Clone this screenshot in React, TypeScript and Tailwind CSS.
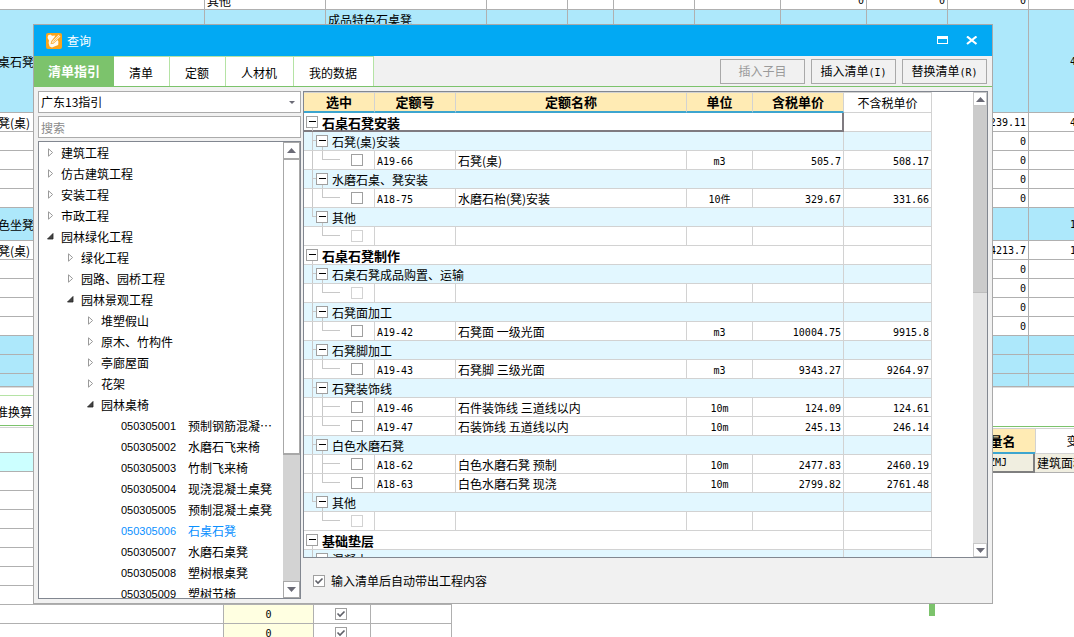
import type { ReactNode } from "react";

type Lead = "group" | "sub" | "subLast" | "leaf" | "leafLast" | "leafEnd";

interface QuotaRow {
  lead: Lead;
  title?: string;
  code?: string;
  name?: string;
  unit?: string;
  taxed?: string;
  untaxed?: string;
}

const quotaRows: QuotaRow[] = [
  { lead: "group", title: "石桌石凳安装" },
  { lead: "sub", title: "石凳(桌)安装" },
  { lead: "leafLast", code: "A19-66", name: "石凳(桌)", unit: "m3", taxed: "505.7", untaxed: "508.17" },
  { lead: "sub", title: "水磨石桌、凳安装" },
  { lead: "leafLast", code: "A18-75", name: "水磨石枱(凳)安装", unit: "10件", taxed: "329.67", untaxed: "331.66" },
  { lead: "subLast", title: "其他" },
  { lead: "leafEnd" },
  { lead: "group", title: "石桌石凳制作" },
  { lead: "sub", title: "石桌石凳成品购置、运输" },
  { lead: "leafLast" },
  { lead: "sub", title: "石凳面加工" },
  { lead: "leafLast", code: "A19-42", name: "石凳面 一级光面", unit: "m3", taxed: "10004.75", untaxed: "9915.8" },
  { lead: "sub", title: "石凳脚加工" },
  { lead: "leafLast", code: "A19-43", name: "石凳脚 三级光面", unit: "m3", taxed: "9343.27", untaxed: "9264.97" },
  { lead: "sub", title: "石凳装饰线" },
  { lead: "leaf", code: "A19-46", name: "石件装饰线 三道线以内", unit: "10m", taxed: "124.09", untaxed: "124.61" },
  { lead: "leafLast", code: "A19-47", name: "石装饰线 五道线以内", unit: "10m", taxed: "245.13", untaxed: "246.14" },
  { lead: "sub", title: "白色水磨石凳" },
  { lead: "leaf", code: "A18-62", name: "白色水磨石凳 预制", unit: "10m", taxed: "2477.83", untaxed: "2460.19" },
  { lead: "leafLast", code: "A18-63", name: "白色水磨石凳 现浇", unit: "10m", taxed: "2799.82", untaxed: "2761.48" },
  { lead: "subLast", title: "其他" },
  { lead: "leafEnd" },
  { lead: "group", title: "基础垫层" },
  { lead: "sub", title: "混凝土" },
];

interface TreeNode {
  level: 0 | 1 | 2;
  label: string;
  open?: boolean;
}

const treeNodes: TreeNode[] = [
  { level: 0, label: "建筑工程" },
  { level: 0, label: "仿古建筑工程" },
  { level: 0, label: "安装工程" },
  { level: 0, label: "市政工程" },
  { level: 0, label: "园林绿化工程", open: true },
  { level: 1, label: "绿化工程" },
  { level: 1, label: "园路、园桥工程" },
  { level: 1, label: "园林景观工程", open: true },
  { level: 2, label: "堆塑假山" },
  { level: 2, label: "原木、竹构件" },
  { level: 2, label: "亭廊屋面" },
  { level: 2, label: "花架" },
  { level: 2, label: "园林桌椅", open: true },
];

const treeLeaves: [string, string][] = [
  ["050305001", "预制钢筋混凝…"],
  ["050305002", "水磨石飞来椅"],
  ["050305003", "竹制飞来椅"],
  ["050305004", "现浇混凝土桌凳"],
  ["050305005", "预制混凝土桌凳"],
  ["050305006", "石桌石凳"],
  ["050305007", "水磨石桌凳"],
  ["050305008", "塑树根桌凳"],
  ["050305009", "塑树节椅"],
];

interface SheetRow {
  size: string;
  tint?: boolean;
  first?: string;
  kind?: string;
  title?: string;
  zeros?: boolean;
  amount?: string;
  tail?: string;
}

const sheetRows: SheetRow[] = [
  { size: "h-[19px]", kind: "其他", zeros: true, amount: "0" },
  { size: "h-[103px]", tint: true, first: "桌石凳", title: "成品特色石桌凳", tail: "4" },
  { size: "h-[19px]", first: "凳(桌)", amount: "4239.11", tail: "4" },
  { size: "h-[19px]", amount: "0" },
  { size: "h-[19px]", amount: "0" },
  { size: "h-[19px]", amount: "0" },
  { size: "h-[19px]", amount: "0" },
  { size: "h-[33px]", tint: true, first: "色坐凳", tail: "1" },
  { size: "h-[19px]", first: "凳(桌)", amount: "4213.7", tail: "1" },
  { size: "h-[19px]", amount: "0" },
  { size: "h-[19px]", amount: "0" },
  { size: "h-[19px]", amount: "0" },
  { size: "h-[19px]", amount: "0" },
  { size: "h-[19px]", tint: true },
  { size: "h-[19px]", tint: true },
  { size: "h-[13px]", tint: true },
];

const num = "font-['DejaVu_Sans_Mono','Noto_Sans_CJK_SC',monospace] text-[10px]";

function Sheet() {
  const cell = "border-r border-b border-[#b0b0b0] p-0 whitespace-nowrap overflow-hidden";
  return (
    <div className="-mt-[9px] shrink-0">
      <table className="w-[1115px] table-fixed border-separate border-spacing-0 leading-[10px]">
        <colgroup>
          <col className="w-[205px]" />
          <col className="w-[121px]" />
          <col className="w-[161px]" />
          <col className="w-[81px]" />
          <col className="w-[46px]" />
          <col className="w-[81px]" />
          <col className="w-[86px]" />
          <col className="w-[86px]" />
          <col className="w-[81px]" />
          <col className="w-[81px]" />
          <col className="w-[86px]" />
        </colgroup>
        <tbody>
          {sheetRows.map((r, i) => (
            <tr key={i} className={r.tint ? `${r.size} bg-[#ade8fb]` : r.size}>
              <td className={`${cell} pt-0.5`}>
                <span className="-ml-0.5">{r.first}</span>
              </td>
              <td className={`${cell} pt-0.5 pl-0.5`}>{r.kind}</td>
              <td className={`${cell} ${r.title ? "pt-[5px]" : ""} pl-0.5 align-top`}>{r.title}</td>
              <td className={cell} />
              <td className={cell} />
              <td className={cell} />
              <td className={cell} />
              <td className={`${cell} ${num} pt-0.5 pr-0.5 text-right`}>{r.zeros ? "0" : ""}</td>
              <td className={`${cell} ${num} pt-0.5 pr-0.5 text-right`}>{r.zeros ? "0" : ""}</td>
              <td className={`${cell} ${num} pt-0.5 pr-0.5 text-right`}>{r.amount}</td>
              <td className={`${cell} ${num} pt-0.5 pl-[41px]`}>{r.tail}</td>
            </tr>
          ))}
        </tbody>
      </table>
    </div>
  );
}

function CheckBox({ id, on, faint, label }: { id?: string; on?: boolean; faint?: boolean; label?: string }) {
  return (
    <span className="relative block size-3 shrink-0">
      <input
        id={id}
        type="checkbox"
        defaultChecked={on}
        disabled={faint}
        aria-label={label}
        className={
          faint
            ? "block size-3 appearance-none border border-[#d2d2d2] bg-white"
            : "block size-3 appearance-none border border-[#a0a0a0] bg-white"
        }
      />
      {on && (
        <svg className="pointer-events-none absolute inset-0" width="12" height="12" viewBox="0 0 12 12" fill="none">
          <path d="M2.5 5.5 5 8 9.5 3.5" stroke="#5f6068" strokeWidth="1.6" />
        </svg>
      )}
    </span>
  );
}

function LowerPane() {
  const cell = "border-r border-b border-[#b0b0b0] p-0";
  return (
    <div className="flex min-h-0 flex-1 border-t border-[#dcdcdc]">
      <div className="w-[929px] shrink-0 overflow-hidden pt-[7px]">
        <div className="h-[31px] border-t border-b border-t-[#b5e3a5] border-b-[#7cc36c] pt-[10px] leading-3">
          <span className="-ml-1">准换算</span>
        </div>
        <table className="mt-px w-[452px] table-fixed border-separate border-spacing-0 border-t border-[#d2d2d2] leading-3">
          <colgroup>
            <col className="w-[224px]" />
            <col className="w-[90px]" />
            <col className="w-[57px]" />
            <col className="w-[81px]" />
          </colgroup>
          <tbody>
            <tr className="h-[25px]">
              <td className={cell} />
              <td className={cell} />
              <td className={cell} />
              <td className={cell} />
            </tr>
            {Array.from({ length: 10 }, (_, i) => (
              <tr key={i} className={i === 0 ? "h-[19px] bg-[#ccffff]" : "h-[19px]"}>
                <td className={cell} />
                <td className={`${cell} ${num} bg-[#ffffe1] pt-0.5 text-center`}>{i > 7 ? "0" : ""}</td>
                <td className={cell}>
                  {i > 7 && (
                    <div className="flex justify-center pr-0.5">
                      <CheckBox on label="0" />
                    </div>
                  )}
                </td>
                <td className={cell} />
              </tr>
            ))}
          </tbody>
        </table>
      </div>
      <div className="w-1.5 shrink-0 pb-[21px]">
        <div className="h-full bg-[#7cc36c]" />
      </div>
      <div className="min-w-0 flex-1 overflow-hidden bg-white pt-[38px]">
        <div className="h-px bg-[#7cc36c]" />
        <table className="mt-px w-[210px] table-fixed border-separate border-spacing-0 border-t border-[#d2d2d2] leading-3">
          <colgroup>
            <col className="w-[22px]" />
            <col className="w-[78px]" />
            <col className="w-[110px]" />
          </colgroup>
          <thead>
            <tr className="h-[25px]">
              <th className="border-r border-[#d2d2d2] p-0" />
              <th className="border-b-2 border-b-[#3da5cf] bg-[#ffebb4] p-0 text-[13px] font-bold">变量名</th>
              <th className="border-b border-l border-[#d2d2d2] p-0 font-normal">变量含义</th>
            </tr>
          </thead>
          <tbody>
            <tr className="h-[19px] bg-[#f0eee0]">
              <td className="border-b border-[#b0b0b0] p-0" />
              <td className={`${num} border-r-2 border-b-2 border-[#7f7f7f] p-0 text-center`}>JZMJ</td>
              <td className="border-b border-[#b0b0b0] py-0 pr-0 pl-0.5">建筑面积</td>
            </tr>
          </tbody>
        </table>
      </div>
    </div>
  );
}

function Caret({ up }: { up?: boolean }) {
  return (
    <svg width="9" height="5" viewBox="0 0 9 5" fill="#6b6b76">
      <path d={up ? "M4.5 0 9 5H0z" : "M4.5 5 0 0h9z"} />
    </svg>
  );
}

function TreeMark({ open }: { open?: boolean }) {
  return open ? (
    <svg width="7" height="7" viewBox="0 0 7 7">
      <path d="M6 .5v5.5H.5z" fill="#444" stroke="#222" strokeWidth=".8" />
    </svg>
  ) : (
    <svg width="7" height="9" viewBox="0 0 7 9" fill="none">
      <path d="M1.5.8v7.4L5.6 4.5z" stroke="#9a9a9a" />
    </svg>
  );
}

const treeIndent = ["pl-2", "pl-7", "pl-12"];

function TreePanel() {
  return (
    <div className="flex min-h-0 flex-1 border border-[#828790] bg-white">
      <ul className="min-w-0 flex-1 overflow-hidden">
        {treeNodes.map((n, i) => (
          <li key={i} className={`flex h-[21px] items-center ${treeIndent[n.level]}`}>
            <button type="button" className="flex items-center gap-[7px]">
              <TreeMark open={n.open} />
              <span>{n.label}</span>
            </button>
          </li>
        ))}
        {treeLeaves.map(([id, name]) => (
          <li
            key={id}
            className={
              id === "050305006"
                ? "flex h-[21px] items-center pl-[82px] text-[#0a90ff]"
                : "flex h-[21px] items-center pl-[82px]"
            }
          >
            <span className="w-[67px] shrink-0 pt-0.5 font-['Liberation_Sans',sans-serif] text-[11px]">{id}</span>
            <span className="whitespace-nowrap">{name}</span>
          </li>
        ))}
      </ul>
      <div className="flex w-[17px] shrink-0 flex-col bg-[#d3d3d3]">
        <button type="button" aria-label="▲" className="flex h-[17px] shrink-0 items-center justify-center border border-[#a8a8a8] bg-white">
          <Caret up />
        </button>
        <div className="h-[296px] shrink-0 border border-b-2 border-[#a8a8a8] bg-white" />
        <div className="flex-1" />
        <button type="button" aria-label="▼" className="flex h-[17px] shrink-0 items-center justify-center border border-[#a8a8a8] bg-white">
          <Caret />
        </button>
      </div>
    </div>
  );
}

function Branch({ lead }: { lead: Lead }) {
  const group = lead === "group";
  const x = group ? 2 : 12;
  return (
    <svg width={group ? 14 : 24} height="18" shapeRendering="crispEdges">
      {!group && <path d={lead === "subLast" ? "M8 0h1v9H8zM8 8h4v1H8z" : "M8 0h1v18H8zM8 8h4v1H8z"} fill="#c8c8c8" />}
      <rect x={x + 6} y="15" width="1" height="3" fill="#c8c8c8" />
      <rect x={x + 0.5} y="3.5" width="11" height="11" fill="#fff" stroke="#a0a0a0" />
      <rect x={x + 3} y="8" width="7" height="1" fill="#000" />
    </svg>
  );
}

function Twig({ lead }: { lead: Lead }) {
  return (
    <svg width="36" height="18" shapeRendering="crispEdges" fill="#c8c8c8">
      {lead !== "leafEnd" && <rect x="8" width="1" height="18" />}
      <rect x="18" width="1" height={lead === "leaf" ? 18 : 9} />
      <rect x="18" y="8" width="18" height="1" />
    </svg>
  );
}

function HeadCell({ children }: { children: ReactNode }) {
  return (
    <th className="border-t border-r border-b-2 border-t-[#d2d2d2] border-r-[#d2d2d2] border-b-[#3da5cf] bg-[#ffebb4] p-0 text-[13px] font-bold">
      {children}
    </th>
  );
}

function QuotaTable() {
  const cell = "border-r border-b border-[#d2d2d2] p-0 whitespace-nowrap";
  return (
    <table className="w-[628px] table-fixed border-separate border-spacing-0 leading-3">
      <colgroup>
        <col className="w-[71px]" />
        <col className="w-[81px]" />
        <col className="w-[231px]" />
        <col className="w-[66px]" />
        <col className="w-[91px]" />
        <col className="w-[88px]" />
      </colgroup>
      <thead>
        <tr className="h-[21px]">
          <HeadCell>选中</HeadCell>
          <HeadCell>定额号</HeadCell>
          <HeadCell>定额名称</HeadCell>
          <HeadCell>单位</HeadCell>
          <HeadCell>含税单价</HeadCell>
          <th className="border-t border-r border-b border-[#d2d2d2] p-0 font-normal">不含税单价</th>
        </tr>
      </thead>
      <tbody>
        {quotaRows.map((r, i) => {
          if (r.title) {
            const group = r.lead === "group";
            return (
              <tr key={i} className={group ? "h-[19px] bg-white" : "h-[19px] bg-[#e2f7ff]"}>
                <td
                  colSpan={5}
                  className={
                    i === 0
                      ? "border-r-2 border-b-2 border-[#7f7b80] p-0"
                      : "border-r border-b border-[#d2d2d2] p-0"
                  }
                >
                  <div className={i === 0 ? "flex h-[17px] items-center gap-1" : "flex h-[18px] items-center gap-1"}>
                    <button type="button" aria-label={r.title} className="h-[18px] shrink-0 self-start">
                      <Branch lead={r.lead} />
                    </button>
                    <span className={group ? "pt-0.5 text-[13px] font-bold" : "pt-0.5"}>{r.title}</span>
                  </div>
                </td>
                <td className={cell} />
              </tr>
            );
          }
          return (
            <tr key={i} className="h-[19px] bg-white">
              <td className={cell}>
                <div className="flex h-[18px] items-center gap-[11px]">
                  <Twig lead={r.lead} />
                  <CheckBox faint={!r.code} label={r.code} />
                </div>
              </td>
              <td className={`${cell} ${num} pt-[3px] pl-0.5`}>{r.code}</td>
              <td className={`${cell} pt-0.5 pl-0.5`}>{r.name}</td>
              <td className={`${cell} ${num} pt-[3px] text-center`}>{r.unit}</td>
              <td className={`${cell} ${num} pt-[3px] pr-0.5 text-right`}>{r.taxed}</td>
              <td className={`${cell} ${num} pt-[3px] pr-0.5 text-right`}>{r.untaxed}</td>
            </tr>
          );
        })}
      </tbody>
    </table>
  );
}

function QuotaPanel() {
  return (
    <div className="flex min-h-0 flex-1 border border-[#828790] bg-white">
      <div className="min-w-0 flex-1 overflow-hidden">
        <QuotaTable />
      </div>
      <div className="flex w-3.5 shrink-0 flex-col bg-[#e2e2e2]">
        <button type="button" aria-label="▲" className="flex h-3.5 shrink-0 items-center justify-center border border-[#c8c8c8] bg-white">
          <Caret up />
        </button>
        <div className="h-[187px] shrink-0 border-b border-[#bdbdbd] bg-[#cbcbcb]" />
        <div className="flex-1" />
        <button type="button" aria-label="▼" className="flex h-3.5 shrink-0 items-center justify-center border border-[#c8c8c8] bg-white">
          <Caret />
        </button>
      </div>
    </div>
  );
}

function TitleBar() {
  return (
    <header className="flex h-[31px] shrink-0 items-center bg-[#02a9f3] pr-[14px] pl-3 text-white">
      <svg width="16" height="16" viewBox="0 0 16 16">
        <rect width="16" height="16" rx="2" fill="#fba51a" />
        <path
          d="M2 2.4 4.2 1.6 6.2 2.8 9.4 2.4 8.2 4.6 5.2 8.2 4.6 11.2 7.6 10.6 11.6 7 12.4 8.6 12.2 12 9 13.2 6 14.6 3.6 13.4 2.6 10 3 7.4 1.6 5z"
          fill="#fffaf0"
        />
        <path d="M6.2 8.2 12.6 1.8 14.4 3.4 8 9.6 5.4 10.4z" fill="#fffaf0" stroke="#fbb64a" strokeWidth=".5" />
        <path d="M7.4 8.6 13.4 2.8" stroke="#fba51a" strokeWidth=".7" />
      </svg>
      <h1 className="pl-[5px] font-normal">查询</h1>
      <div className="ml-auto flex items-center gap-[17px]">
        <button type="button" aria-label="□">
          <svg width="12" height="9" viewBox="0 0 12 9" shapeRendering="crispEdges" fill="#fff">
            <path d="M0 0h11v8H0zM1 3v4h9V3z" fillRule="evenodd" />
          </svg>
        </button>
        <button type="button" aria-label="×">
          <svg width="12" height="9" viewBox="0 0 12 9" fill="none">
            <path d="M1 0.5 10.5 8M10.5 0.5 1 8" stroke="#fff" strokeWidth="2.2" />
          </svg>
        </button>
      </div>
    </header>
  );
}

const tabs = ["清单", "定额", "人材机", "我的数据"];

function Toolbar() {
  const action = "h-[25px] w-[85px] border border-[#a9a9a9] bg-[#f1f1f1] whitespace-nowrap";
  return (
    <div className="flex h-[31px] shrink-0 border-b border-[#7cc36c]">
      <nav className="flex">
        <button type="button" className="bg-[#7cc36c] px-3.5 text-[13px] font-bold text-white">
          清单指引
        </button>
        {tabs.map((t) => (
          <button key={t} type="button" className="border-t border-r border-[#b5e3a5] bg-white pt-0.5 pr-4 pl-[15px]">
            {t}
          </button>
        ))}
      </nav>
      <div className="ml-auto flex items-center gap-1.5 pr-[5px]">
        <button type="button" disabled className={`${action} text-[#9a9a9a]`}>
          插入子目
        </button>
        <button type="button" className={action}>
          插入清单<span className={num}>(I)</span>
        </button>
        <button type="button" className={action}>
          替换清单<span className={num}>(R)</span>
        </button>
      </div>
    </div>
  );
}

function QueryDialog() {
  return (
    <section className="absolute top-6 right-[81px] bottom-[33px] left-[33px] flex flex-col border border-[#a9a9a9] bg-[#f1f1f1]">
      <TitleBar />
      <Toolbar />
      <div className="flex min-h-0 flex-1 gap-0.5 pt-1 pr-1 pl-1">
        <div className="flex w-[263px] shrink-0 flex-col gap-[3px] pb-1">
          <div className="relative h-[22px] shrink-0">
            <select aria-label="广东13指引" className="block h-full w-full appearance-none border border-[#ababab] bg-white pl-0.5">
              <option>广东13指引</option>
            </select>
            <svg className="pointer-events-none absolute top-[10px] right-[6px]" width="6" height="3" viewBox="0 0 6 3" fill="#6b6b76">
              <path d="M0 0h6L3 3z" />
            </svg>
          </div>
          <input
            type="text"
            aria-label="搜索"
            placeholder="搜索"
            className="h-[22px] shrink-0 border border-[#ababab] bg-white pl-0.5 placeholder:text-[#8a8a8a]"
          />
          <TreePanel />
        </div>
        <div className="flex min-w-0 flex-1 flex-col">
          <QuotaPanel />
          <div className="flex h-[45px] shrink-0 items-center gap-1.5 pl-[10px]">
            <CheckBox id="auto-bring" on />
            <label htmlFor="auto-bring">输入清单后自动带出工程内容</label>
          </div>
        </div>
      </div>
    </section>
  );
}

export default function App() {
  return (
    <main className="relative flex h-screen min-h-0 flex-col overflow-hidden bg-white font-['Noto_Sans_CJK_SC',sans-serif] text-xs text-black">
      <Sheet />
      <LowerPane />
      <QueryDialog />
    </main>
  );
}
